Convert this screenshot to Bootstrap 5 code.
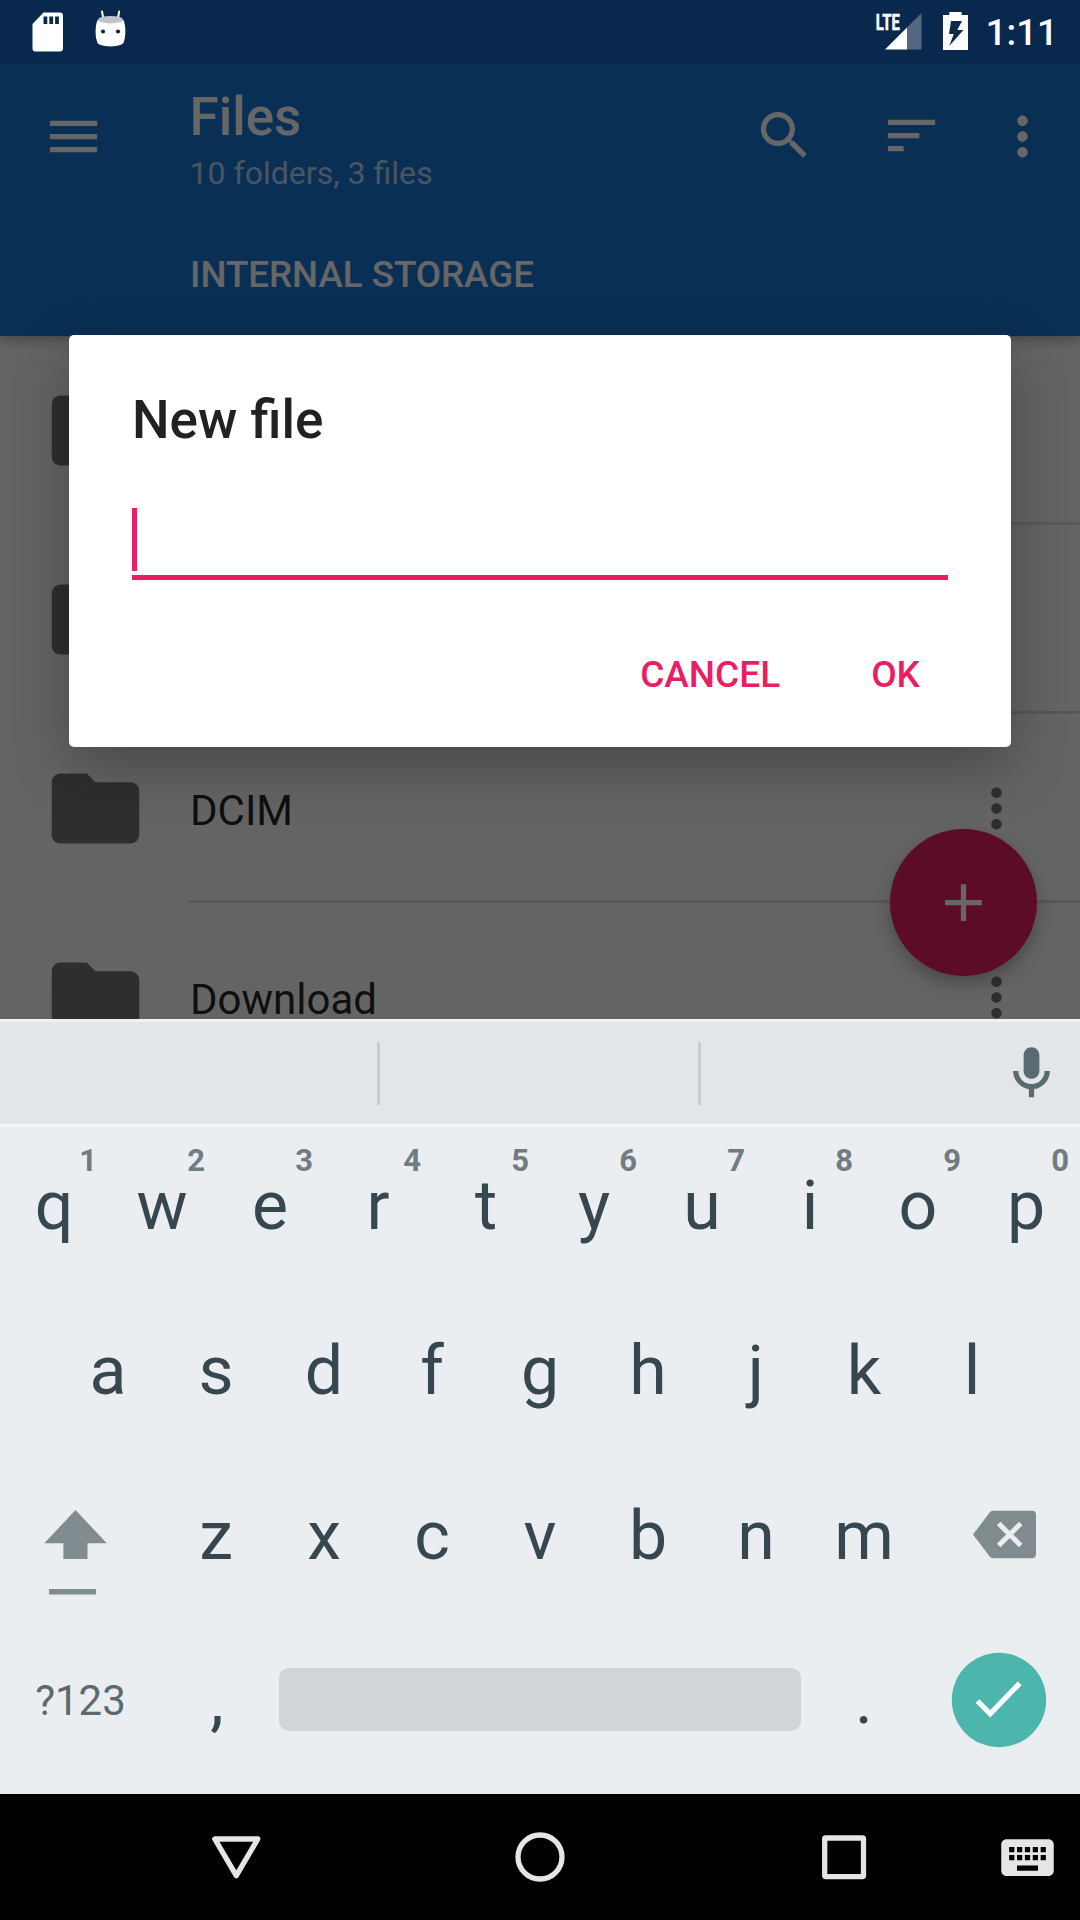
<!DOCTYPE html>
<html lang="en">
<head>
<meta charset="utf-8">
<meta name="viewport" content="width=device-width, initial-scale=1">
<title>Files</title>
<link href="https://cdn.jsdelivr.net/npm/bootstrap@5.3.0/dist/css/bootstrap.min.css" rel="stylesheet">
<style>
body{font-family:Roboto,"Noto Sans",sans-serif;background:#000;overflow:hidden}
svg{display:block;flex:none}
.screen{width:1080px;height:1920px}
.ico{width:63px;height:63px;fill:currentColor}
.statusbar{height:63px;background:#08284d;color:#fff;z-index:5}
.clock{font-size:36.75px;font-weight:500;line-height:43px;margin-left:16px;margin-right:22px;padding-top:2px}
.appwin{height:956px;background:#fafafa}
.topbar{height:273px;background:#1976d2;color:#fff;box-shadow:0 4px 12px rgba(0,0,0,.3);z-index:1}
.topbar .tools{height:147px;padding-left:42px;padding-right:26px}
.heading{margin-left:84.500px;padding-top:4px}
.heading h1{font-size:53px;font-weight:500;line-height:62px;margin:0}
.heading p{font-size:32.100px;line-height:38px;margin:6px 0 0;color:rgba(255,255,255,.7)}
.topbar .find{margin-top:-2px}
.topbar .sort{margin-left:64px;margin-top:-2px}
.topbar .menu-more{margin-left:48px}
.crumb{font-size:36.700px;font-weight:500;line-height:44px;margin:43px 0 0 190px}
.file-row{height:189px;padding-left:43px}
.folder{width:105px;height:105px;fill:rgba(0,0,0,.54)}
.file-body{height:189px;margin-left:41px;border-bottom:3px solid rgba(0,0,0,.12);font-size:42px;line-height:36px;color:rgba(0,0,0,.87);padding:3px 52px 0 0}
.file-body span{padding:4px 0 0 1px}
.file-body .ico{color:rgba(0,0,0,.54);margin-top:-1px}
.fab{right:43px;bottom:43px;width:147px;height:147px;background:#e91e63;color:#fff;box-shadow:0 8px 18px rgba(0,0,0,.28)}
.scrim{background:rgba(0,0,0,.6);z-index:2}
.dialog-box{width:942px;height:412px;background:#fff;border-radius:5px;padding:54px 63px 0;box-shadow:0 20px 56px rgba(0,0,0,.28)}
.dialog-box h2{font-size:53px;font-weight:500;line-height:62px;margin:0;color:#212121}
.entry{height:72px;margin-top:57px;border-bottom:5px solid #e91e63}
.caret{width:5px;height:63px;background:#e91e63}
.actions{margin-top:73px;padding-right:28px;gap:91px}
.actions button{font-size:37px;font-weight:500;line-height:44px;color:#e91e63;padding:0;border:0;border-radius:0}
.keyboard{height:775px;background:#ebeef1;color:#37474f}
.suggest{height:105px;background:#e2e6e9;border-top:3px solid #eff2f4;padding-top:20px}
.suggest .slot{height:63px;border-right:3px solid #c9cdd0}
.suggest .ico{color:#5a6a71;margin-right:17px}
.krow{height:165px;line-height:68px;font-size:68px}
.krow.first{height:163px;border-top:3px solid #f4f6f8}
.key{width:108px;padding-bottom:47px;text-align:center;flex:none}
.key .hint{font-size:31px;font-weight:700;line-height:31px;color:#6f7c82;top:18px;right:11px}
.sym{font-size:42px;line-height:50px;color:#5a6a71;width:162px;padding-right:1px;padding-top:3px;text-align:center}
.comma{padding-left:2px}
.spacebar{width:522px;height:63px;border-radius:10px;background:#d1d5d8;margin:0 9px}
.navbtns{height:126px;background:#000;color:#e5e5e5}
</style>
</head>
<body>
<div class="screen d-flex flex-column">

  <header class="statusbar d-flex align-items-center position-relative">
    <svg width="130" height="63" viewBox="0 0 130 63">
      <path fill="#fff" fill-rule="evenodd" d="M43.5 12.5H60a3 3 0 0 1 3 3v34a3 3 0 0 1-3 2H35.500a3 3 0 0 1-3-3V24zM43.500 16.500v7.500h3.800v-7.500zM49.300 16.500v7.500h3.800v-7.500zM55.100 16.500v7.500h3.800v-7.500z"/>
      <path d="M102 11.500l1.500 8M119.200 11.500l-1.500 8" stroke="#fff" stroke-width="2" stroke-linecap="round"/>
      <path fill="#fff" d="M97.500 20q13 5 26 0c2.500 6 2.500 16 .3 22-.5 1.500-1.300 2.200-3 2.700-6 2.300-14.600 2.300-20.600 0-1.700-.5-2.500-1.200-3-2.700-2.200-6-2.200-16 .3-22z"/>
      <ellipse cx="110.500" cy="19.700" rx="12.500" ry="3.700" fill="#bcc5cf"/>
      <circle cx="103" cy="31.500" r="2.100" fill="#08284d"/><circle cx="118" cy="31.500" r="2.100" fill="#08284d"/>
    </svg>
    <svg class="ms-auto" width="98" height="63" viewBox="872 0 98 63">
      <text x="875.800" y="29.500" font-family="Roboto" font-weight="700" font-size="22.500" fill="#fff" stroke="#fff" stroke-width=".6" textLength="24" lengthAdjust="spacingAndGlyphs">LTE</text>
      <path fill="#fff" fill-opacity=".3" d="M921.500 13v36.500H907V27.500z"/>
      <path fill="#fff" d="M907 27.500v22h-22z"/>
      <path fill="#fff" fill-rule="evenodd" d="M949.300 12h12.400v3h6.300v35h-25V15h6.300zM951 21l-2 13h4.800l-4.600 12 14.300-16h-6.200l4.700-9z"/>
    </svg>
    <span class="clock">1:11</span>
  </header>

  <main class="appwin position-relative overflow-hidden">
    <div class="topbar position-relative">
      <div class="tools d-flex align-items-center">
        <svg class="ico" viewBox="0 0 24 24"><path d="M3 18h18v-2H3v2zm0-5h18v-2H3v2zm0-7v2h18V6H3z"/></svg>
        <div class="heading">
          <h1>Files</h1>
          <p>10 folders, 3 files</p>
        </div>
        <svg class="ico find ms-auto" viewBox="0 0 24 24"><path d="M15.500 14h-.79l-.28-.27C15.410 12.590 16 11.110 16 9.500 16 5.910 13.090 3 9.500 3S3 5.910 3 9.500 5.910 16 9.500 16c1.610 0 3.090-.59 4.230-1.570l.27.28v.79l5 4.990L20.490 19l-4.990-5zm-6 0C7.010 14 5 11.990 5 9.500S7.010 5 9.500 5 14 7.010 14 9.500 11.990 14 9.500 14z"/></svg>
        <svg class="ico sort" viewBox="0 0 24 24"><path d="M3 18h6v-2H3v2zM3 6v2h18V6H3zm0 7h12v-2H3v2z"/></svg>
        <svg class="ico menu-more" viewBox="0 0 24 24"><path d="M12 8c1.100 0 2-.9 2-2s-.9-2-2-2-2 .9-2 2 .9 2 2 2zm0 2c-1.100 0-2 .9-2 2s.9 2 2 2 2-.9 2-2-.9-2-2-2zm0 6c-1.100 0-2 .9-2 2s.9 2 2 2 2-.9 2-2-.9-2-2-2z"/></svg>
      </div>
      <div class="crumb">INTERNAL STORAGE</div>
    </div>

    <div id="files"></div>

    <div class="fab position-absolute rounded-circle d-flex align-items-center justify-content-center">
      <svg class="ico" viewBox="0 0 24 24"><path d="M19 13h-6v6h-2v-6H5v-2h6V5h2v6h6v2z"/></svg>
    </div>

    <div class="scrim position-absolute top-0 start-0 w-100 h-100 d-flex align-items-center justify-content-center">
      <div class="dialog-box">
        <h2>New file</h2>
        <div class="entry"><div class="caret"></div></div>
        <div class="actions d-flex justify-content-end">
          <button class="btn" type="button">CANCEL</button>
          <button class="btn" type="button">OK</button>
        </div>
      </div>
    </div>
  </main>

  <section class="keyboard d-flex flex-column">
    <div class="suggest d-flex">
      <div class="slot" style="width:380px"></div>
      <div class="slot" style="width:321px"></div>
      <svg class="ico ms-auto" viewBox="0 0 24 24"><path d="M12 14c1.660 0 3-1.340 3-3V5c0-1.660-1.340-3-3-3S9 3.340 9 5v6c0 1.660 1.340 3 3 3zm5-3c0 2.760-2.240 5-5 5s-5-2.240-5-5H5c0 3.530 2.610 6.430 6 6.920V21h2v-3.080c3.390-.49 6-3.390 6-6.920h-2z"/></svg>
    </div>
    <div class="krow first d-flex align-items-stretch" id="row1"></div>
    <div class="krow d-flex justify-content-center align-items-end" id="row2"></div>
    <div class="krow d-flex justify-content-between align-items-end">
      <svg width="162" height="165" viewBox="0 1452 162 165" fill="#818c90">
        <path d="M75.500 1510l31.300 33.300H87.500V1559H63.400v-15.700H44.300z"/>
        <path d="M49 1589h47v5.500H49z"/>
      </svg>
      <div class="d-flex" id="row3"></div>
      <svg width="162" height="165" viewBox="918 1452 162 165">
        <path fill="#818c90" d="M993 1510.700h39a4 4 0 0 1 4 4v39.500a4 4 0 0 1-4 4h-39q-2.200 0-3.500-2L973 1534.500l16.500-21.800q1.300-2 3.500-2z"/>
        <path d="M998.700 1523.500l22 22M1020.700 1523.500l-22 22" stroke="#ebeef1" stroke-width="5" fill="none"/>
      </svg>
    </div>
    <div class="krow d-flex align-items-center">
      <div class="sym">?123</div>
      <div class="key comma pt-5">,</div>
      <div class="spacebar"></div>
      <div class="key pt-5">.</div>
      <svg width="162" height="165" viewBox="918 1617 162 165">
        <circle cx="999" cy="1700" r="47.200" fill="#4db6ac"/>
        <path d="M977.500 1701l12.700 12.800 29.500-30.500" stroke="#fff" stroke-width="5.300" fill="none"/>
      </svg>
    </div>
  </section>

  <nav class="navbtns">
    <svg width="1080" height="126" viewBox="0 1794 1080 126" fill="none" stroke="currentColor" stroke-width="5.300" stroke-linejoin="round">
      <path d="M214.800 1839h43l-21.500 36.700z"/>
      <circle cx="540" cy="1857" r="22"/>
      <rect x="824.700" y="1838" width="38.800" height="38.600" rx="1"/>
      <g transform="translate(996 1826) scale(2.625)" fill="currentColor" stroke="none"><path d="M20 5H4c-1.100 0-1.990.9-1.990 2L2 17c0 1.100.9 2 2 2h16c1.100 0 2-.9 2-2V7c0-1.100-.9-2-2-2zm-9 3h2v2h-2V8zm0 3h2v2h-2v-2zM8 8h2v2H8V8zm0 3h2v2H8v-2zm-1 2H5v-2h2v2zm0-3H5V8h2v2zm9 7H8v-2h8v2zm0-4h-2v-2h2v2zm0-3h-2V8h2v2zm3 3h-2v-2h2v2zm0-3h-2V8h2v2z"/></g>
    </svg>
  </nav>
</div>

<script src="https://cdn.jsdelivr.net/npm/bootstrap@5.3.0/dist/js/bootstrap.bundle.min.js"></script>
<script>
const folder = '<svg class="folder" viewBox="0 0 24 24"><path d="M10 4H4c-1.100 0-1.990.9-1.990 2L2 18c0 1.100.9 2 2 2h16c1.100 0 2-.9 2-2V8c0-1.100-.9-2-2-2h-8l-2-2z"/></svg>';
const more = '<svg class="ico ms-auto" viewBox="0 0 24 24"><path d="M12 8c1.100 0 2-.9 2-2s-.9-2-2-2-2 .9-2 2 .9 2 2 2zm0 2c-1.100 0-2 .9-2 2s.9 2 2 2 2-.9 2-2-.9-2-2-2zm0 6c-1.100 0-2 .9-2 2s.9 2 2 2 2-.9 2-2-.9-2-2-2z"/></svg>';
document.getElementById('files').innerHTML = ['', '', 'DCIM', 'Download'].map(n =>
  `<div class="file-row d-flex align-items-center">${folder}<div class="file-body flex-grow-1 d-flex align-items-center"><span>${n}</span>${more}</div></div>`).join('');
const key = (c, h) => `<div class="key position-relative d-flex align-items-end justify-content-center">${h ? `<span class="hint position-absolute">${h}</span>` : ''}<span>${c}</span></div>`;
document.getElementById('row1').innerHTML = [...'qwertyuiop'].map((c, i) => key(c, '1234567890'[i])).join('');
document.getElementById('row2').innerHTML = [...'asdfghjkl'].map(c => key(c)).join('');
document.getElementById('row3').innerHTML = [...'zxcvbnm'].map(c => key(c)).join('');
</script>
</body>
</html>
